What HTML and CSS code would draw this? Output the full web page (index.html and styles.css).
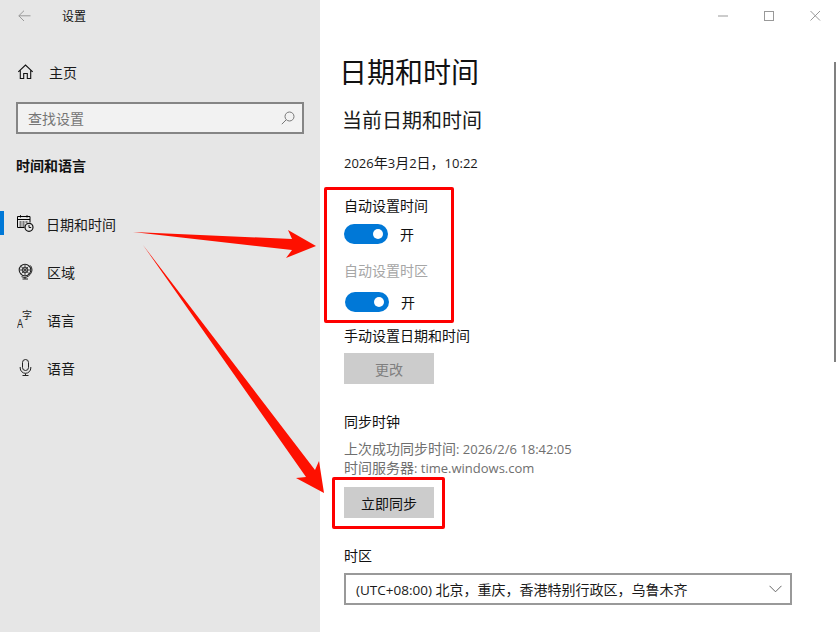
FILE: index.html
```html
<!DOCTYPE html>
<html lang="zh">
<head>
<meta charset="utf-8">
<title>设置</title>
<link rel="stylesheet" href="styles.css">
</head>
<body>
<div class="window">
  <aside class="side">
    <header class="side-top">
      <svg class="back" width="13" height="12" viewBox="0 0 13 12"><path d="M6 .7 .8 5.800 6 11M.8 5.800H12.500" fill="none" stroke="#999" stroke-width="1"/></svg>
      <span class="app-title">设置</span>
    </header>
    <div class="nav-item home">
      <svg class="nav-icon" width="16" height="16" viewBox="0 0 16 16"><path d="M.8 7.800 8 1l7.200 6.800M2.800 6.500V14.500H6.200V9.500H9.800V14.500H13.200V6.500" fill="none" stroke="#111" stroke-width="1.100"/></svg>
      <span>主页</span>
    </div>
    <div class="search"><span>查找设置</span>
      <svg width="14" height="14" viewBox="0 0 14 14"><circle cx="8.500" cy="5.500" r="4.500" fill="none" stroke="#777"/><path d="M5.200 8.800.8 13.200" stroke="#777"/></svg>
    </div>
    <h2 class="group">时间和语言</h2>
    <nav class="nav">
      <div class="nav-item active">
        <svg class="nav-icon" width="17" height="17" viewBox="0 0 17 17"><path d="M7.500 12.500H.5V1.500h12.500V7.500M.5 4.500h12.500M3.500 .2V2.500M10 .2V2.500" fill="none" stroke="#000"/><path d="M2.500 7h2M5.500 7h2M8.500 7h2M2.500 9h2M5.500 9h2M2.500 11h2M5.500 11h2" stroke="#111"/><circle cx="12" cy="12.300" r="4" fill="none" stroke="#111" stroke-width="1.200"/><path d="M12 10v2.500h2.200" fill="none" stroke="#111"/></svg>
        <span>日期和时间</span>
      </div>
      <div class="nav-item">
        <svg class="nav-icon" width="17" height="17" viewBox="0 0 17 17"><circle cx="8" cy="7" r="5.800" fill="none" stroke="#222" stroke-width="1.100"/><path d="M3.500 3 12.500 11M8 1.500V12.500M2.500 7H13.500M4.500 10.500 11.500 3.500" stroke="#444"/><circle cx="8" cy="7" r="2.800" fill="none" stroke="#333"/><path d="M13.500 2.500a7.500 7.500 0 0 1-9 11.200M8 14v2M5.500 16h5.500" fill="none" stroke="#222"/></svg>
        <span>区域</span>
      </div>
      <div class="nav-item">
        <span class="lang-icon"><i class="lang-a">A</i><i class="lang-z">字</i></span>
        <span>语言</span>
      </div>
      <div class="nav-item">
        <svg class="nav-icon" width="17" height="17" viewBox="0 0 17 17"><rect x="5.500" y=".5" width="6" height="11" rx="3" fill="none" stroke="#222"/><path d="M3.200 8v1a5.300 5.300 0 0 0 10.600 0V8M8.500 14.500v2M5.500 16.500h6" fill="none" stroke="#222"/></svg>
        <span>语音</span>
      </div>
    </nav>
  </aside>

  <main class="main">
    <div class="caption">
      <svg width="15" height="15" viewBox="0 0 15 15"><path d="M2 8h10" stroke="#999"/></svg>
      <svg width="15" height="15" viewBox="0 0 15 15"><rect x="2.500" y="3.500" width="9" height="9" fill="none" stroke="#999"/></svg>
      <svg width="15" height="15" viewBox="0 0 15 15"><path d="M2.500 3 12 12.500M12 3 2.500 12.500" stroke="#999"/></svg>
    </div>
    <h1 class="title">日期和时间</h1>
    <h2 class="subtitle">当前日期和时间</h2>
    <p class="now"><span class="lt">2026</span>年<span class="lt">3</span>月<span class="lt">2</span>日，<span class="lt">10:22</span></p>

    <div class="label first">自动设置时间</div>
    <div class="toggle-row"><span class="toggle"></span><span>开</span></div>
    <div class="label muted">自动设置时区</div>
    <div class="toggle-row nudge"><span class="toggle"></span><span>开</span></div>

    <div class="label manual">手动设置日期和时间</div>
    <div class="btn disabled">更改</div>

    <div class="label sync">同步时钟</div>
    <div class="info">上次成功同步时间<span class="lt">: 2026/2/6 18:42:05</span></div>
    <div class="info">时间服务器<span class="lt">: time.windows.com</span></div>
    <div class="btn sync-btn">立即同步</div>

    <div class="label tz">时区</div>
    <div class="select"><span><span class="lt-wide">(UTC+08:00) </span>北京，重庆，香港特别行政区，乌鲁木齐</span>
      <svg width="13" height="8" viewBox="0 0 13 8"><path d="M.5.8 6.500 6.800 12.500.8" fill="none" stroke="#666"/></svg>
    </div>
    <div class="scrollbar"></div>
  </main>

  <div class="mark mark-a"></div>
  <div class="mark mark-b"></div>
  <svg class="arrows" width="838" height="632" viewBox="0 0 838 632">
    <path fill="#fe1000" d="M133 232 292 239 288 230 316 246 286 258 292 250Z"/>
    <path fill="#fe1000" d="M143 245 315 470 319 461 324 493 296 478 306 477Z"/>
  </svg>
</div>
</body>
</html>
```

FILE: styles.css
```css
* { box-sizing: border-box; }
html, body { margin: 0; height: 100%; overflow: hidden; }
body { font-family: "Open Sans", "Noto Sans CJK SC", sans-serif; font-size: 14px; color: #1a1a1a; background: #fff; }
.window { position: relative; display: flex; width: 838px; height: 632px; overflow: hidden; }
.lt { font-size: 13px; }
.lt-wide { font-size: 13.500px; }

.side { width: 320px; flex: none; background: #e6e6e6; }
.side-top { display: flex; align-items: center; height: 32px; padding-left: 18px; }
.app-title { margin-left: 31px; padding-top: 2px; font-size: 12px; line-height: 16px; color: #111; }
.nav-item { position: relative; display: flex; align-items: center; height: 48px; padding-left: 17px; font-size: 14px; }
.nav-item > span:last-child { padding-top: 2px; }
.nav-icon { width: 17px; flex: none; margin-right: 13px; }
.home { height: 24px; margin-top: 28px; }
.home > span:last-child { padding-top: 0; }
.home .nav-icon { margin-right: 15px; }
.search { display: flex; align-items: center; justify-content: space-between; width: 288px; height: 32px; margin: 18px 0 0 16px; padding: 0 7px 0 10px; border: 2px solid #858585; background: #f2f2f2; color: #757575; font-size: 14px; }
.group { margin: 22px 0 0 16px; font-size: 14px; line-height: 20px; font-weight: 700; color: #111; }
.nav { margin-top: 23px; }
.active .nav-icon { margin-right: 12px; }
.active::before { content: ""; position: absolute; left: 0; top: 12px; width: 4px; height: 24px; background: #0078d7; }
.lang-icon { position: relative; flex: none; width: 17px; height: 17px; margin-right: 13px; }
.lang-a, .lang-z { position: absolute; font-style: normal; color: #222; }
.lang-a { left: 0; bottom: -2px; font-size: 12px; line-height: 12px; transform: scaleX(.8); transform-origin: left; }
.lang-z { left: 5px; top: -1px; font-size: 10px; line-height: 10px; }

.main { position: relative; flex: 1; padding-left: 24px; }
.caption { position: absolute; top: 8px; right: 15px; display: flex; gap: 31px; }
.title { margin: 54px 0 0 -5px; font-size: 28px; line-height: 36px; font-weight: 400; color: #111; }
.subtitle { margin: 17px 0 0 -2px; font-size: 20px; line-height: 28px; font-weight: 400; color: #1a1a1a; }
.now { margin: 18px 0 0; font-size: 14px; line-height: 20px; }
.label { font-size: 14px; line-height: 20px; color: #111; }
.first { margin-top: 23px; }
.muted { margin-top: 17px; color: #a6a6a6; }
.toggle-row { display: flex; align-items: center; gap: 12px; height: 20px; margin-top: 8px; font-size: 14px; color: #111; }
.nudge { margin-left: 1px; margin-top: 11px; }
.toggle { position: relative; width: 44px; height: 20px; border-radius: 10px; background: #0078d7; }
.toggle::after { content: ""; position: absolute; right: 5px; top: 5px; width: 10px; height: 10px; border-radius: 50%; background: #fff; }
.manual { margin-top: 14px; }
.btn { display: flex; align-items: center; justify-content: center; width: 90px; height: 31px; background: #ccc; font-size: 14px; color: #111; }
.disabled { margin-top: 7px; color: #7f7f7f; }
.sync { margin-top: 28px; }
.info { font-size: 14px; line-height: 18px; color: #6f6f6f; }
.sync + .info { margin-top: 8px; }
.info + .info { margin-top: 1px; }
.sync-btn { margin-top: 10px; }
.tz { margin-top: 28px; }
.select { display: flex; align-items: center; justify-content: space-between; width: 448px; height: 32px; margin-top: 7px; padding: 0 8px 0 10px; border: 2px solid #999; font-size: 14px; color: #1a1a1a; }
.scrollbar { position: absolute; right: 2px; top: 62px; width: 2px; height: 300px; background: #808080; }

.mark { position: absolute; border: 3px solid #fe0000; border-radius: 2px; }
.mark-a { left: 324px; top: 187px; width: 130px; height: 136px; }
.mark-b { left: 332px; top: 477px; width: 113px; height: 52px; }
.arrows { position: absolute; left: 0; top: 0; pointer-events: none; }
```
